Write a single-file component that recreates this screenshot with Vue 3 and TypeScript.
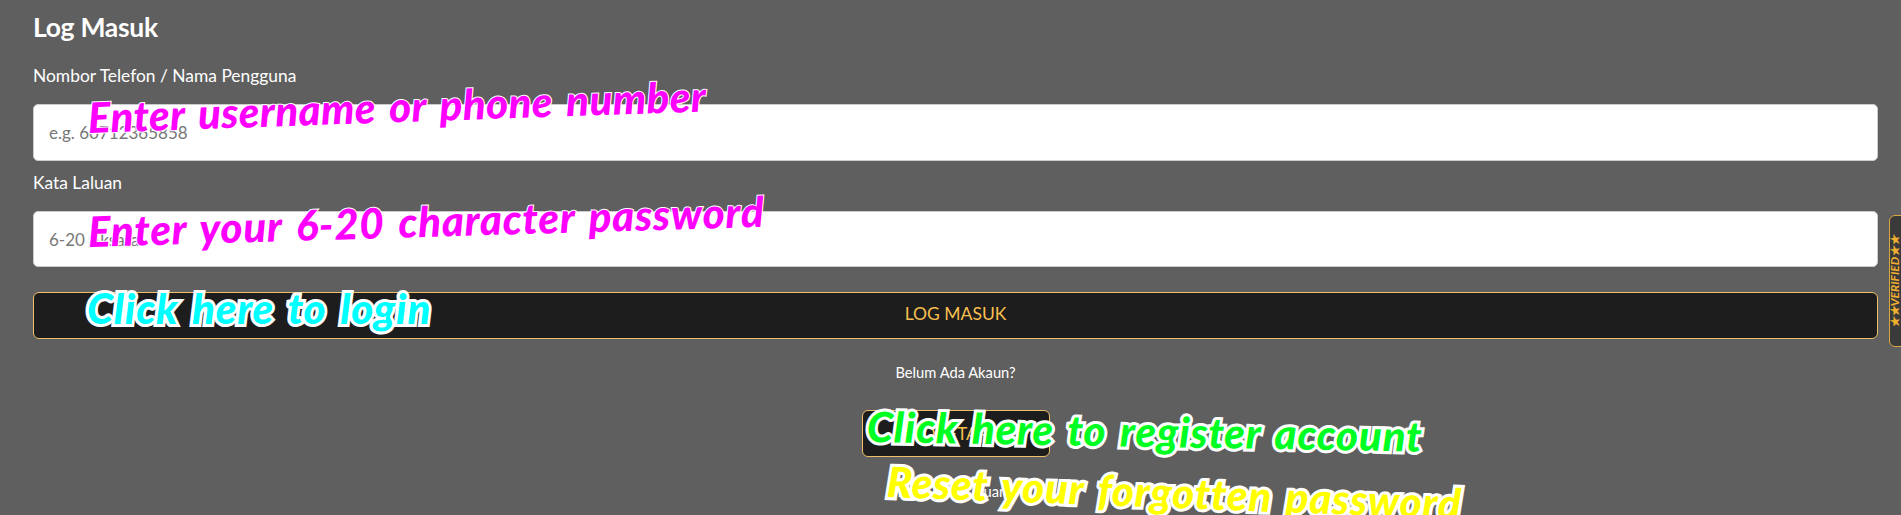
<script setup lang="ts">
const notes = [
  { id: 'user', text: 'Enter username or phone number' },
  { id: 'pass', text: 'Enter your 6-20 character password' },
  { id: 'login', text: 'Click here to login' },
  { id: 'reg', text: 'Click here to register account' },
  { id: 'reset', text: 'Reset your forgotten password' },
]
</script>

<template>
  <main class="page">
    <h1 class="title">Log Masuk</h1>
    <label class="label first" for="u">Nombor Telefon / Nama Pengguna</label>
    <input id="u" class="field" type="text" placeholder="e.g. 60712365858" />
    <label class="label second" for="p">Kata Laluan</label>
    <input id="p" class="field" type="password" placeholder="6-20 Aksara" />
    <button class="btn wide" type="button">LOG MASUK</button>
    <p class="hint ask">Belum Ada Akaun?</p>
    <button class="btn small" type="button">DAFTAR</button>
    <p class="hint forgot">Lupa Kata Laluan?</p>

    <div class="badge"><span class="badge-text">★★VERIFIED★★</span></div>
    <span v-for="n in notes" :key="n.id" class="note" :class="n.id">{{ n.text }}</span>
  </main>
</template>

<style>
html, body { margin: 0; background: #5f5f5f; overflow: hidden; }
</style>

<style scoped>
.page {
  position: relative;
  box-sizing: border-box;
  height: 515px;
  padding: 0 23px 0 33px;
  display: flex;
  flex-direction: column;
  overflow: hidden;
  background: #5f5f5f;
  color: #fff;
  font-family: Lato, "Noto Sans", sans-serif;
}
.title {
  margin: 0;
  height: 55px;
  line-height: 55px;
  font-size: 26.5px;
  font-weight: 700;
  letter-spacing: -0.3px;
}
.label { font-size: 17.4px; }
.first { height: 41px; line-height: 41px; margin-bottom: 8px; }
.second { height: 44px; line-height: 44px; margin-bottom: 6px; }
.field {
  box-sizing: border-box;
  height: 56px;
  width: 100%;
  flex: none;
  padding: 0 15px;
  border: 1px solid #ccc;
  border-radius: 5px;
  background: #fff;
  font: 17px Lato, sans-serif;
  outline: none;
}
.field:first-of-type { height: 57px; }
.field::placeholder { color: #777; }
.btn {
  box-sizing: border-box;
  border: 1px solid #f0c069;
  border-radius: 6px;
  background: #1d1d1d;
  color: #f8bf4f;
  font: 17.5px Lato, sans-serif;
}
.wide { height: 47px; width: 100%; margin-top: 25px; flex: none; padding-bottom: 5px; }
.small { height: 47px; width: 188px; align-self: center; flex: none; }
.hint {
  text-align: center;
  font-size: 14.7px;
  line-height: 20px;
  margin: 0;
}
.ask { margin: 23px 0 28px; }
.forgot { margin-top: 24px; }

.badge {
  position: absolute;
  left: 1889px;
  top: 215px;
  width: 20px;
  height: 132px;
  box-sizing: border-box;
  border: 1px solid #d9a53f;
  border-radius: 6px;
  background: #3a3a3a;
  display: flex;
  align-items: center;
  justify-content: center;
}
.badge-text {
  transform: rotate(-90deg);
  white-space: nowrap;
  color: #f0b030;
  font-size: 12px;
  font-weight: 700;
  font-style: italic;
  margin-left: -8px;
}

.note {
  position: absolute;
  white-space: nowrap;
  font-family: Lato, sans-serif;
  font-weight: 900;
  font-style: italic;
  font-size: 42px;
  line-height: 1;
  letter-spacing: 0.8px;
  word-spacing: 4px;
  transform-origin: left center;
  paint-order: stroke fill;
  -webkit-text-stroke: 6px #fff;
}
.user { left: 88px; top: 96px; color: #ff00ff; letter-spacing: 0.4px; -webkit-text-stroke-width: 2px; transform: rotate(-2deg); }
.pass { left: 88px; top: 210px; color: #ff00ff; -webkit-text-stroke-width: 2px; transform: rotate(-1.7deg); }
.login { left: 87px; top: 287px; color: #00ffff; }
.reg { left: 867px; top: 405px; color: #00ff22; transform: rotate(1deg); }
.reset { left: 887px; top: 460px; color: #ffff00; transform: rotate(2.2deg); }
</style>
